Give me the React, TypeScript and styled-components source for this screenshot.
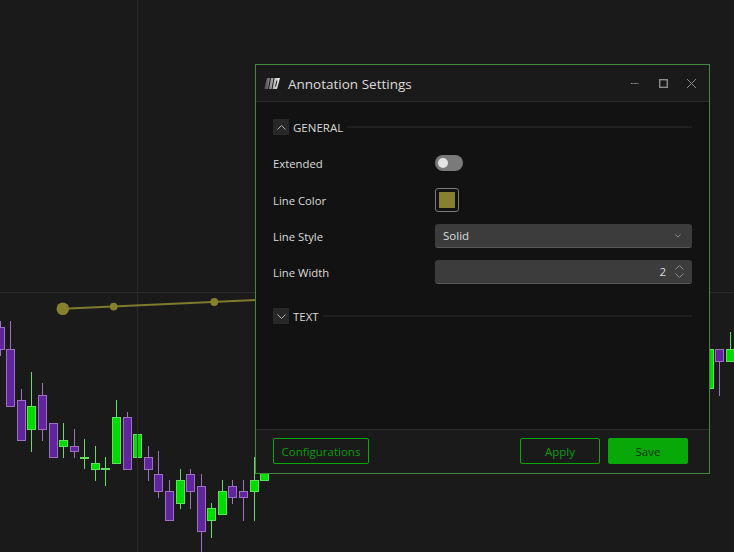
import * as React from "react";
import styled, { createGlobalStyle } from "styled-components";

const GlobalStyle = createGlobalStyle`
  html, body {
    margin: 0;
    padding: 0;
    height: 100%;
    background: #1a1a1a;
    overflow: hidden;
  }
  * { box-sizing: border-box; }
`;

const UP = { body: "#00dc00", edge: "#60e060" };
const DOWN = { body: "#60249c", edge: "#9e70c4" };

// x, body top, body bottom, wick top, wick bottom
const candles: [number, number, number, number, number, boolean][] = [
  [0, 327, 350, 321, 356, false],
  [10, 349, 407, 321, 407, false],
  [21, 400, 441, 389, 441, false],
  [31, 406, 430, 372, 452, true],
  [42, 395, 430, 383, 441, false],
  [53, 423, 458, 423, 458, false],
  [63, 440, 447, 423, 458, true],
  [74, 446, 452, 429, 458, false],
  [84, 457, 459, 439, 469, true],
  [95, 463, 470, 446, 481, true],
  [105, 468, 470, 457, 486, true],
  [116, 417, 464, 400, 464, true],
  [127, 417, 470, 412, 470, false],
  [137, 434, 458, 434, 458, true],
  [148, 457, 470, 446, 481, false],
  [158, 474, 492, 451, 498, false],
  [169, 491, 521, 480, 521, false],
  [180, 480, 504, 469, 509, true],
  [190, 474, 492, 469, 509, false],
  [201, 486, 532, 474, 552, false],
  [211, 508, 521, 503, 538, true],
  [222, 491, 515, 480, 515, true],
  [232, 486, 498, 480, 504, false],
  [243, 491, 498, 480, 521, false],
  [254, 480, 492, 457, 521, true],
  [264, 460, 481, 460, 481, true],
  [709, 349, 389, 349, 389, true],
  [719, 349, 362, 349, 396, false],
  [730, 349, 362, 332, 362, true],
];

const Page = styled.div`
  position: relative;
  width: 734px;
  height: 552px;
  overflow: hidden;
  background: #1a1a1a;
  font-family: "Open Sans", "Noto Sans", sans-serif;
`;

const ChartSvg = styled.svg`
  display: block;
  width: 734px;
  height: 552px;
`;

const Dialog = styled.section`
  position: absolute;
  left: 255px;
  top: 64px;
  width: 455px;
  height: 410px;
  display: flex;
  flex-direction: column;
  background: #121212;
  border: 1px solid #45893f;
`;

const TitleBar = styled.header`
  height: 37px;
  flex: none;
  display: flex;
  align-items: center;
  padding: 0 13px 0 8px;
  background: #1a1a1a;
  border-bottom: 1px solid #2c2c2c;
`;

const Title = styled.h1`
  margin: 0 0 0 8px;
  padding-top: 2px;
  flex: 1;
  font-size: 13.5px;
  font-weight: 400;
  color: #dcdcdc;
`;

const WindowButtons = styled.div`
  display: flex;
  align-items: center;
  gap: 19px;
  color: #8c8c8c;
`;

const Body = styled.div`
  flex: 1;
  padding: 17px 17px 0;
`;

const SectionHead = styled.div`
  display: flex;
  align-items: center;
  height: 16px;
`;

const Chevron = styled.span`
  width: 16px;
  height: 16px;
  flex: none;
  display: flex;
  align-items: center;
  justify-content: center;
  background: #282828;
  color: #b4b4b4;
`;

const SectionName = styled.span`
  margin: 0 4px;
  font-size: 11.5px;
  color: #d8d8d8;
`;

const SectionRule = styled.span`
  flex: 1;
  height: 2px;
  background: #1f1f1f;
`;

const Rows = styled.div`
  padding: 9px 0 18px;
`;

const Row = styled.div<{ $height: number }>`
  display: grid;
  grid-template-columns: 162px 1fr;
  align-items: center;
  height: ${(p) => p.$height}px;
`;

const Label = styled.label`
  padding-top: 1px;
  font-size: 11.3px;
  color: #dcdcdc;
`;

const Toggle = styled.span`
  display: block;
  position: relative;
  width: 28px;
  height: 16px;
  border-radius: 8px;
  background: #7a7a7a;

  &::after {
    content: "";
    position: absolute;
    left: 3px;
    top: 3px;
    width: 10px;
    height: 10px;
    border-radius: 50%;
    background: #e4e4e4;
  }
`;

const Swatch = styled.span`
  display: flex;
  align-items: center;
  justify-content: center;
  width: 24px;
  height: 24px;
  border: 1px solid #7a7a7a;
  border-radius: 3px;
  background: #121212;

  &::after {
    content: "";
    width: 16px;
    height: 16px;
    background: #87812f;
  }
`;

const Field = styled.div`
  display: flex;
  align-items: center;
  height: 24px;
  padding: 0 8px;
  background: #3c3c3c;
  border-bottom: 1px solid #585858;
  border-radius: 3px;
  font-size: 11.5px;
  color: #dcdcdc;
`;

const FieldValue = styled.span<{ $right?: boolean }>`
  flex: 1;
  text-align: ${(p) => (p.$right ? "right" : "left")};
`;

const SelectArrow = styled.svg`
  margin-right: 3px;
`;

const Spin = styled.span`
  display: flex;
  flex-direction: column;
  gap: 3px;
  margin-left: 9px;
  color: #8c8c8c;

  svg {
    display: block;
  }
`;

const Footer = styled.footer`
  height: 44px;
  flex: none;
  display: flex;
  align-items: center;
  gap: 8px;
  padding: 0 21px 1px 17px;
  background: #1a1a1a;
  border-top: 1px solid #2c2c2c;
`;

const Button = styled.button<{ $width: number; $primary?: boolean }>`
  width: ${(p) => p.$width}px;
  height: 26px;
  padding: 0;
  border: 1px solid #08a808;
  border-radius: 2px;
  background: ${(p) => (p.$primary ? "#08a808" : "transparent")};
  color: ${(p) => (p.$primary ? "#0b330b" : "#0f9a0f")};
  font-family: inherit;
  font-size: 11.5px;
`;

const Spacer = styled.span`
  flex: 1;
`;

const Chart = () => (
  <ChartSvg viewBox="0 0 734 552">
    <path d="M0 292.5H734M137.5 0V552" stroke="#2a2a2a" fill="none" />
    {candles.map(([x, top, bottom, wickTop, wickBottom, up]) => {
      const c = up ? UP : DOWN;
      return (
        <g key={x}>
          <line x1={x + 0.5} x2={x + 0.5} y1={wickTop} y2={wickBottom} stroke={c.edge} />
          <rect
            x={x - 3.5}
            y={top + 0.5}
            width={8}
            height={bottom - top - 1}
            fill={c.body}
            stroke={c.edge}
          />
        </g>
      );
    })}
    <line x1="137.5" x2="137.5" y1="434" y2="458" stroke="#2a2a2a" />
    <line x1="63" y1="308.7" x2="260" y2="299.8" stroke="#7f7b2e" strokeWidth="2" />
    <circle cx="62.8" cy="308.8" r="6.3" fill="#87812f" />
    <circle cx="113.7" cy="306.6" r="3.9" fill="#87812f" />
    <circle cx="214.3" cy="302" r="3.9" fill="#87812f" />
  </ChartSvg>
);

const Logo = () => (
  <svg width="16" height="11" viewBox="0 0 16 11">
    <defs>
      <linearGradient id="logo-fade" x1="0" x2="1" y1="0" y2="0">
        <stop offset="0" stopColor="#3c3c3c" />
        <stop offset="0.45" stopColor="#9c9c9c" />
        <stop offset="1" stopColor="#f2f2f2" />
      </linearGradient>
    </defs>
    <path d="M3 0h13l-3 11H0z" fill="url(#logo-fade)" />
    <path d="M6 0h1L5 11H4zM9.500 0h1l-2 11h-1zM12.500 2.500h1l-1.500 6h-1z" fill="#1a1a1a" />
  </svg>
);

const Up = () => (
  <svg width="9" height="5" viewBox="0 0 9 5" fill="none" stroke="currentColor">
    <path d="M.5 4.500l4-4 4 4" />
  </svg>
);

const Down = () => (
  <svg width="9" height="5" viewBox="0 0 9 5" fill="none" stroke="currentColor">
    <path d="M.5.500l4 4 4-4" />
  </svg>
);

export default function App() {
  return (
    <Page>
      <GlobalStyle />
      <Chart />
      <Dialog>
        <TitleBar>
          <Logo />
          <Title>Annotation Settings</Title>
          <WindowButtons>
            <svg width="9" height="9" viewBox="0 0 9 9" stroke="currentColor" fill="none">
              <path d="M0 4.500h8" strokeDasharray="1 .3" />
            </svg>
            <svg width="9" height="9" viewBox="0 0 9 9" stroke="currentColor" fill="none" strokeWidth="1.4">
              <rect x=".7" y=".7" width="7.600" height="7.600" />
            </svg>
            <svg width="9" height="9" viewBox="0 0 9 9" stroke="currentColor" fill="none">
              <path d="M0 0l9 9M9 0L0 9" />
            </svg>
          </WindowButtons>
        </TitleBar>
        <Body>
          <SectionHead>
            <Chevron>
              <Up />
            </Chevron>
            <SectionName>GENERAL</SectionName>
            <SectionRule />
          </SectionHead>
          <Rows>
            <Row $height={37}>
              <Label>Extended</Label>
              <Toggle />
            </Row>
            <Row $height={37}>
              <Label>Line Color</Label>
              <Swatch />
            </Row>
            <Row $height={36}>
              <Label>Line Style</Label>
              <Field>
                <FieldValue>Solid</FieldValue>
                <SelectArrow width="6" height="4" viewBox="0 0 6 4" fill="none" stroke="#8c8c8c">
                  <path d="M.5.500 3 3 5.500.500" />
                </SelectArrow>
              </Field>
            </Row>
            <Row $height={36}>
              <Label>Line Width</Label>
              <Field>
                <FieldValue $right>2</FieldValue>
                <Spin>
                  <Up />
                  <Down />
                </Spin>
              </Field>
            </Row>
          </Rows>
          <SectionHead>
            <Chevron>
              <Down />
            </Chevron>
            <SectionName>TEXT</SectionName>
            <SectionRule />
          </SectionHead>
        </Body>
        <Footer>
          <Button $width={96}>Configurations</Button>
          <Spacer />
          <Button $width={80}>Apply</Button>
          <Button $width={80} $primary>
            Save
          </Button>
        </Footer>
      </Dialog>
    </Page>
  );
}
